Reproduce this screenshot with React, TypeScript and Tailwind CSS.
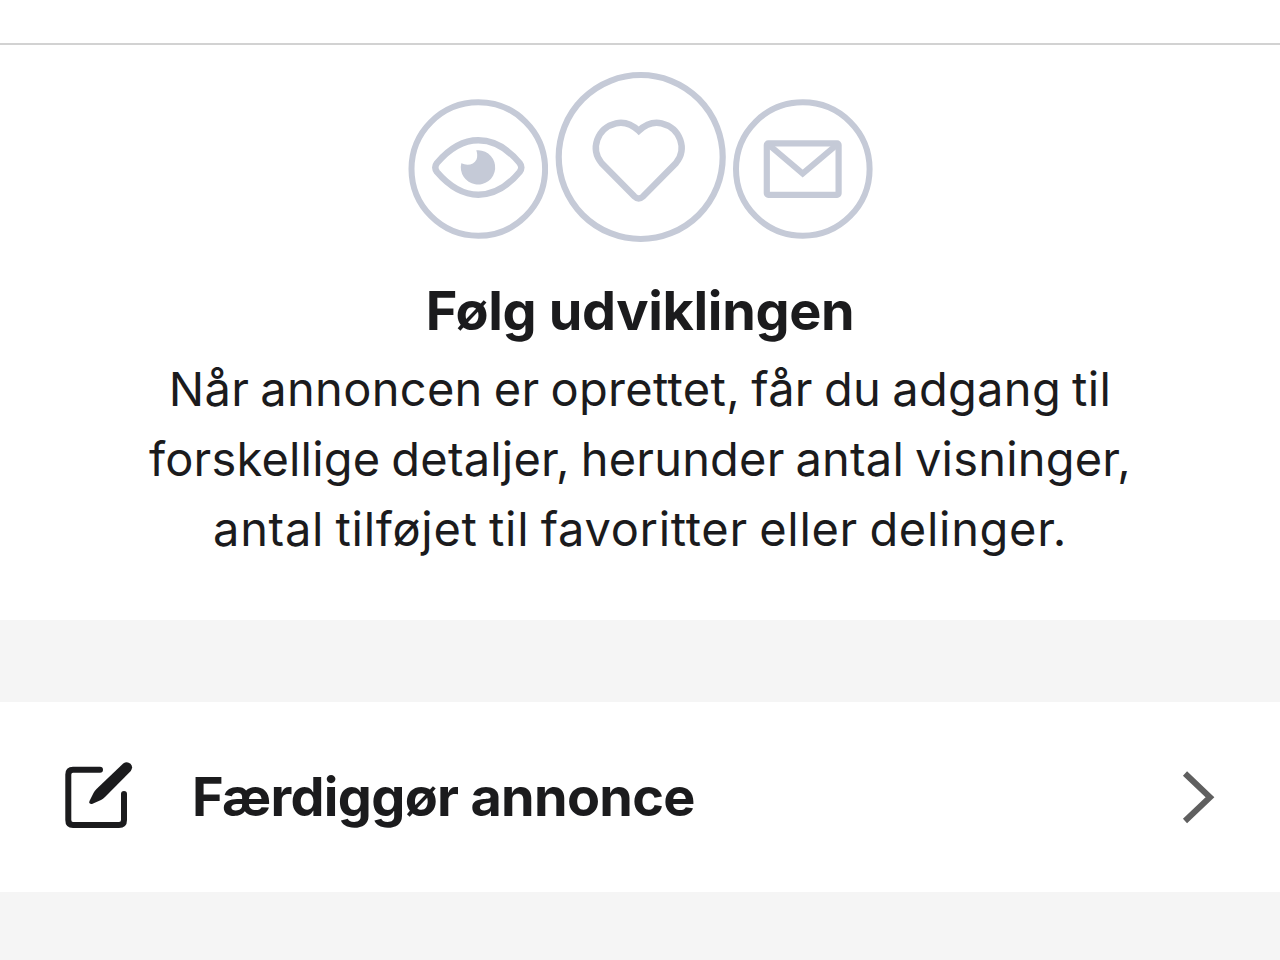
const ink = 'text-[#1b1b1d]';

function EyeBadge() {
  return (
    <svg className="h-[140px] w-[140px]" viewBox="408 99 140 140" fill="none" stroke="#c5cad7" strokeWidth="6">
      <circle cx="478.3" cy="169" r="66.8" />
      <path strokeWidth="6.4" strokeLinejoin="round" d="M437 163C449 149 463 140.300 478.300 140.300S508 149 519.600 163Q523 167.500 519.600 172C508 186 494 194.700 478.300 194.700S449 186 437 172Q433.600 167.500 437 163Z" />
      <path fill="#c5cad7" stroke="none" d="M478.300 150.200A17.200 17.200 0 1 1 461.300 163.300C467 166 474 165 476.500 159.500C477.700 156.500 477.300 153 476.300 150.300Z" />
    </svg>
  );
}

function HeartBadge() {
  return (
    <svg className="h-[172px] w-[172px]" viewBox="555 71 172 172" fill="none" stroke="#c5cad7">
      <circle cx="640.7" cy="157" r="82" strokeWidth="6.2" />
      <path strokeWidth="6.4" d="M638.700 130.800C631 123.500 623.500 121.600 616 123.300C597 128 590 149 601.500 163L634.500 196.500Q638.700 200.500 643 196.500L676 163C687.500 149 680.500 128 661.500 123.300C654 121.600 646.500 123.500 638.700 130.800Z" />
    </svg>
  );
}

function MailBadge() {
  return (
    <svg className="h-[140px] w-[140px]" viewBox="733 99 140 140" fill="none" stroke="#c5cad7" strokeWidth="6">
      <circle cx="802.8" cy="169" r="66.8" />
      <rect x="766.800" y="143.400" width="71.800" height="51.400" rx="1.500" strokeWidth="6.2" />
      <path d="M769 145L802.700 173.500L836.500 145" />
    </svg>
  );
}

export default function App() {
  return (
    <div className={`flex h-[960px] w-[1280px] flex-col overflow-hidden bg-[#f5f5f5] font-['Inter',sans-serif] ${ink}`}>
      <header className="h-[45px] shrink-0 border-b-2 border-[#d2d2d2] bg-white" />
      <section className="flex h-[575px] shrink-0 flex-col items-center bg-white pt-[26px]">
        <div className="flex items-end gap-[7px]">
          <div className="pb-1"><EyeBadge /></div>
          <HeartBadge />
          <div className="-ml-px pb-1"><MailBadge /></div>
        </div>
        <h1 className="mt-[33px] text-[54px] leading-[70px] font-bold tracking-[-0.35px] whitespace-nowrap">Følg udviklingen</h1>
        <div className="mt-[8px] flex flex-col items-center text-[47px] leading-[70px] whitespace-nowrap [word-spacing:-2.5px]">
          <span className="tracking-[0.32px]">Når annoncen er oprettet, får du adgang til</span>
          <span className="tracking-[0.2px]">forskellige detaljer, herunder antal visninger,</span>
          <span className="tracking-[0.7px]">antal tilføjet til favoritter eller delinger.</span>
        </div>
      </section>
      <button className="mt-[82px] flex h-[190px] w-full shrink-0 items-center bg-white pl-[60px] text-left">
        <svg className="h-[76px] w-[76px]" viewBox="60 759 76 76" fill="none" stroke="#1b1b1d" strokeWidth="6" strokeLinecap="round">
          <path d="M100 769.700H73Q68.300 769.700 68.300 774.500V820Q68.300 825 73 825H119Q124 825 124 820V794" />
          <path fill="#1b1b1d" stroke="none" d="M89.500 801L93.500 793Q94.500 791 96.500 789L123.200 763.500Q127 760.700 130.500 763.700Q133.500 767 130.800 771L105 797Q103 799 101 800L92 804Q88.500 804.500 89.500 801Z" />
        </svg>
        <span className="ml-[56px] text-[54px] leading-[70px] font-bold tracking-[-0.7px] whitespace-nowrap">Færdiggør annonce</span>
        <svg className="mr-[60px] ml-auto h-[60px] w-[40px]" viewBox="1180 767 40 60" fill="none" stroke="#5f5f5f" strokeWidth="6">
          <path d="M1185 773.500L1210 797.300L1185 821" />
        </svg>
      </button>
    </div>
  );
}
